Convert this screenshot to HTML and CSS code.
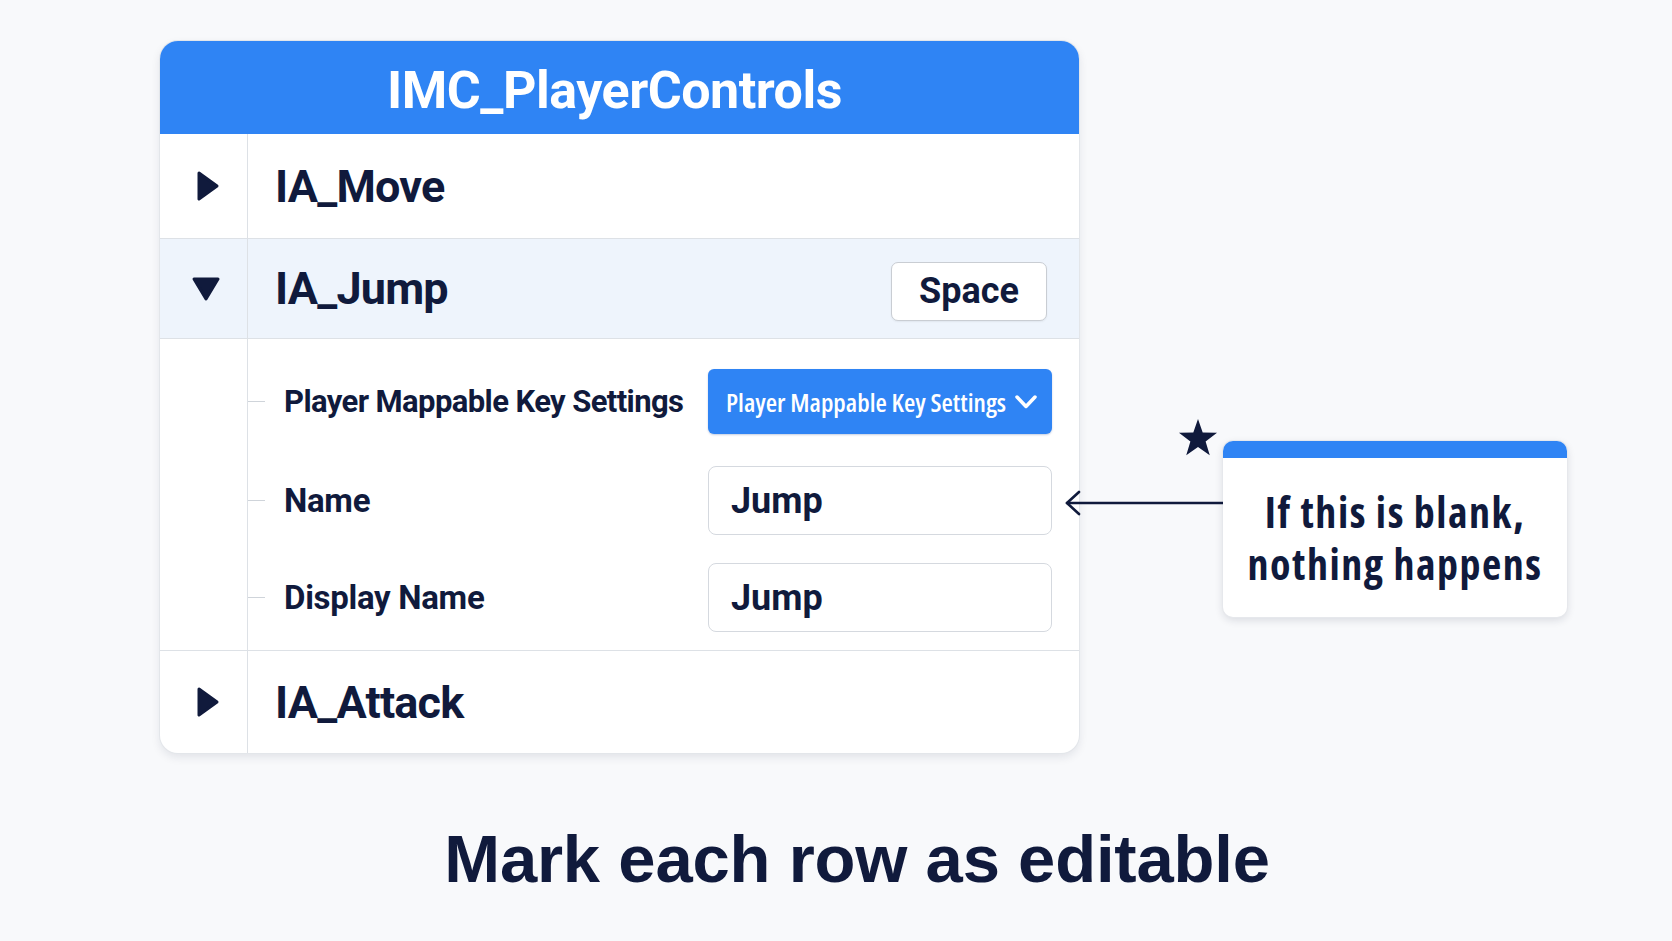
FILE: index.html
```html
<!DOCTYPE html>
<html lang="en">
<head>
<meta charset="utf-8">
<title>IMC_PlayerControls</title>
<link rel="stylesheet" href="styles.css">
</head>
<body>
<div class="page">
  <div class="stage">
    <section class="card">
      <header class="card-head">IMC_PlayerControls</header>

      <div class="row">
        <div class="toggle">
          <svg class="tri-right" width="24" height="32" viewBox="0 0 24 32"><path d="M3 3 L21 16 L3 29 Z"/></svg>
        </div>
        <div class="row-main"><span class="row-title">IA_Move</span></div>
      </div>

      <div class="row row-open">
        <div class="toggle">
          <svg class="tri-down" width="30" height="26" viewBox="0 0 30 26"><path d="M3 3 H27 L15 23 Z"/></svg>
        </div>
        <div class="row-main">
          <span class="row-title">IA_Jump</span>
          <span class="key">Space</span>
        </div>
      </div>

      <div class="details">
        <div class="toggle"></div>
        <div class="details-body">
          <div class="prop prop-first">
            <span class="tick"></span>
            <span class="prop-label prop-label-long">Player Mappable Key Settings</span>
            <div class="dropdown">
              <span class="dropdown-text">Player Mappable Key Settings</span>
              <svg class="chev" width="24" height="16" viewBox="0 0 24 16"><path d="M3 3 L12 12.5 L21 3"/></svg>
            </div>
          </div>
          <div class="prop">
            <span class="tick"></span>
            <span class="prop-label">Name</span>
            <div class="field">Jump</div>
          </div>
          <div class="prop">
            <span class="tick"></span>
            <span class="prop-label">Display Name</span>
            <div class="field">Jump</div>
          </div>
        </div>
      </div>

      <div class="row row-last">
        <div class="toggle">
          <svg class="tri-right" width="24" height="32" viewBox="0 0 24 32"><path d="M3 3 L21 16 L3 29 Z"/></svg>
        </div>
        <div class="row-main"><span class="row-title">IA_Attack</span></div>
      </div>
    </section>

    <aside class="callout">
      <svg class="callout-star" width="40" height="40" viewBox="0 0 40 40"><polygon points="20,1 24.7,14.53 39.02,14.82 27.61,23.47 31.76,37.18 20,29 8.24,37.18 12.39,23.47 0.98,14.82 15.3,14.53"/></svg>
      <svg class="callout-arrow" width="160" height="30" viewBox="0 0 160 30"><path d="M4 15 H160"/><path d="M16 4 L4 15 L16 26"/></svg>
      <div class="callout-bar"></div>
      <p class="callout-text">If this is blank,<br>nothing happens</p>
    </aside>
  </div>

  <h1 class="caption">Mark each row as editable</h1>
</div>
</body>
</html>
```

FILE: styles.css
```css
* { box-sizing: border-box; }

html, body {
  margin: 0;
  padding: 0;
  background: #f8f9fb;
}

body {
  width: 1672px;
  height: 941px;
  overflow: hidden;
  color: #101a3c;
  font-family: Roboto, "Liberation Sans", Arial, sans-serif;
}

.page {
  padding: 41px 0 0 160px;
}

.stage {
  display: flex;
  align-items: flex-start;
}

/* ---------- card ---------- */
.card {
  width: 919px;
  height: 712px;
  background: #ffffff;
  border-radius: 18px;
  box-shadow: 0 0 0 1px #e3e6ea, 0 4px 10px rgba(20, 30, 60, 0.10);
  overflow: hidden;
  display: flex;
  flex-direction: column;
}

.card-head {
  height: 93px;
  background: #2f84f4;
  color: #ffffff;
  font-weight: 700;
  font-size: 52px;
  display: flex;
  align-items: center;
  justify-content: center;
  padding: 5px 10px 0 0;
  letter-spacing: -0.5px;
}

.row {
  display: grid;
  grid-template-columns: 88px 1fr;
  height: 105px;
  border-bottom: 1.5px solid #dde1e6;
}

.row-open {
  height: 100px;
  background: #eef4fc;
}

.row-last {
  flex: 1;
  border-bottom: 0;
}

.toggle {
  border-right: 1.5px solid #dde1e6;
  display: flex;
  align-items: center;
  justify-content: center;
  padding-left: 8px;
}

.toggle svg path {
  fill: #101a3c;
  stroke: #101a3c;
  stroke-width: 3;
  stroke-linejoin: round;
}

.tri-down {
  margin-left: -4px;
}

.row-main {
  display: flex;
  align-items: center;
  justify-content: space-between;
  padding: 0 32px 0 27px;
}

.row-title {
  font-size: 45px;
  font-weight: 700;
  letter-spacing: -0.8px;
}

.key {
  width: 156px;
  height: 59px;
  margin-top: 5px;
  border: 1.5px solid #c9cdd3;
  border-radius: 7px;
  background: #ffffff;
  display: flex;
  align-items: center;
  justify-content: center;
  font-size: 36px;
  font-weight: 700;
  box-shadow: 0 1px 2px rgba(0, 0, 0, 0.06);
}

/* ---------- details ---------- */
.details {
  display: grid;
  grid-template-columns: 88px 1fr;
  height: 312px;
  border-bottom: 1.5px solid #dde1e6;
}

.details-body {
  display: flex;
  flex-direction: column;
  gap: 28px;
  padding: 30px 27px 0 0;
}

.prop {
  display: grid;
  grid-template-columns: 17px 1fr 344px;
  align-items: center;
}

.prop-first {
  margin-bottom: 4px;
}

.tick {
  height: 1.5px;
  background: #cfd4da;
}

.prop-label {
  margin-left: 19px;
  font-size: 33px;
  font-weight: 700;
  letter-spacing: -0.3px;
}

.prop-label-long {
  font-size: 31px;
  letter-spacing: -0.6px;
}

.dropdown {
  height: 65px;
  background: #2f84f4;
  border-radius: 6px;
  color: #ffffff;
  display: flex;
  align-items: center;
  justify-content: space-between;
  padding: 0 14px 0 18px;
  box-shadow: 0 1px 2px rgba(20, 60, 140, 0.25);
}

.dropdown-text {
  font-family: "Open Sans", sans-serif;
  font-stretch: 75%;
  font-weight: 600;
  font-size: 26px;
  white-space: nowrap;
}

.chev path {
  fill: none;
  stroke: #ffffff;
  stroke-width: 3.5;
  stroke-linecap: round;
  stroke-linejoin: round;
}

.field {
  height: 69px;
  border: 1.5px solid #d5d9df;
  border-radius: 8px;
  background: #ffffff;
  display: flex;
  align-items: center;
  padding-left: 22px;
  font-size: 36px;
  font-weight: 700;
}

/* ---------- callout ---------- */
.callout {
  position: relative;
  margin: 400px 0 0 144px;
  width: 344px;
  height: 176px;
  background: #ffffff;
  border-radius: 10px;
  box-shadow: 0 0 0 1px #e6e8ec, 0 3px 8px rgba(20, 30, 60, 0.14);
  display: flex;
  flex-direction: column;
}

.callout-bar {
  height: 17px;
  background: #2f84f4;
  border-radius: 10px 10px 0 0;
}

.callout-text {
  flex: 1;
  margin: 0;
  display: flex;
  align-items: center;
  justify-content: center;
  text-align: center;
  font-family: "Open Sans", sans-serif;
  font-stretch: 75%;
  font-weight: 700;
  font-size: 42px;
  line-height: 52px;
  letter-spacing: 1.5px;
  white-space: nowrap;
}

.callout-star {
  position: absolute;
  left: -45px;
  top: -23px;
  fill: #101a3c;
}

.callout-arrow {
  position: absolute;
  left: -160px;
  top: 47px;
}

.callout-arrow path {
  fill: none;
  stroke: #101a3c;
  stroke-width: 2.6;
  stroke-linecap: round;
  stroke-linejoin: round;
}

/* ---------- caption ---------- */
.caption {
  margin: 67px 0 0 -160px;
  padding-left: 42px;
  text-align: center;
  font-family: "Liberation Sans", Arial, sans-serif;
  font-weight: 700;
  font-size: 67px;
  line-height: 77px;
  letter-spacing: -0.2px;
}
```
